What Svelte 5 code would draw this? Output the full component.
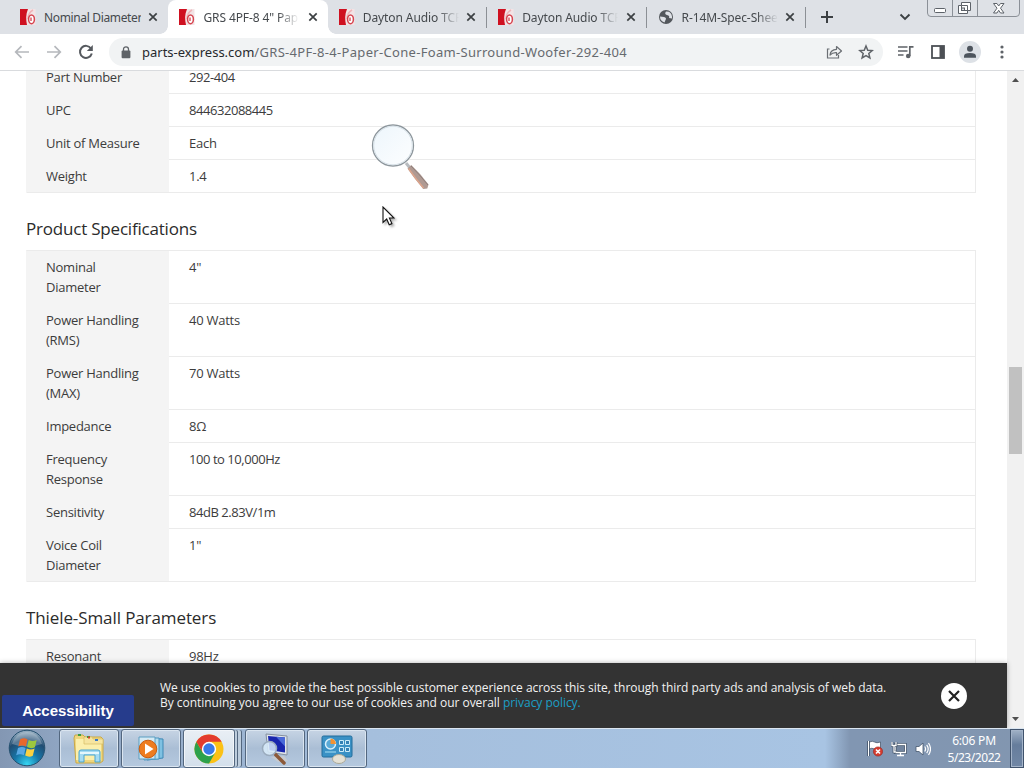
<script lang="ts">
  type Row = { label: string; value: string; numeric?: boolean };

  const tabs = [
    { title: "Nominal Diameter", icon: "parts", active: false },
    { title: "GRS 4PF-8 4\" Paper Cone", icon: "parts", active: true },
    { title: "Dayton Audio TCP115", icon: "parts", active: false },
    { title: "Dayton Audio TCP115", icon: "parts", active: false },
    { title: "R-14M-Spec-Sheet", icon: "globe", active: false },
  ];

  const details: Row[] = [
    { label: "Part Number", value: "292-404", numeric: true },
    { label: "UPC", value: "844632088445", numeric: true },
    { label: "Unit of Measure", value: "Each" },
    { label: "Weight", value: "1.4" },
  ];

  const specs: Row[] = [
    { label: "Nominal Diameter", value: "4\"" },
    { label: "Power Handling (RMS)", value: "40 Watts" },
    { label: "Power Handling (MAX)", value: "70 Watts" },
    { label: "Impedance", value: "8Ω" },
    { label: "Frequency Response", value: "100 to 10,000Hz", numeric: true },
    { label: "Sensitivity", value: "84dB 2.83V/1m", numeric: true },
    { label: "Voice Coil Diameter", value: "1\"" },
  ];

  const thiele: Row[] = [{ label: "Resonant Frequency (Fs)", value: "98Hz" }];

  let showCookies = $state(true);
</script>

{#snippet specTable(rows: Row[])}
  <dl class="spec-table">
    {#each rows as row}
      <div class="row">
        <dt>{row.label}</dt>
        <dd class:numeric={row.numeric}>{row.value}</dd>
      </div>
    {/each}
  </dl>
{/snippet}

<div class="screen">
  <header class="tabstrip">
    {#each tabs as tab}
      <div class="tab" class:active={tab.active}>
        {#if tab.icon === "parts"}
          <svg class="favicon" width="16" height="16" viewBox="0 0 16 16">
            <path d="M7 0h8.500v16H6z" fill="#f3e3e5" />
            <path d="M0 0H8Q5 7 7 16H0Z" fill="#cf1020" />
            <path d="M13 1Q8 4 8 10" fill="none" stroke="#efb4b8" stroke-width="1.500" />
            <ellipse cx="11.500" cy="10.300" rx="2.900" ry="4.400" fill="#fff" stroke="#d64550" stroke-width="1.500" />
            <path d="M11 8.500v3.500" stroke="#d2323e" stroke-width="1.200" />
          </svg>
        {:else}
          <svg class="favicon" width="16" height="16" viewBox="0 0 16 16">
            <circle cx="8" cy="8" r="7" fill="#53575c" />
            <path d="M8 2.5Q6 5 9 6Q12 6.500 11 9L14 9.500Q14.500 5 11 2.700ZM2 7.500L6 8Q9 9 7.500 11L6.500 13.500Q2 12 2 7.500Z" fill="#dee1e6" />
          </svg>
        {/if}
        <span class="tab-title">{tab.title}</span>
        <svg class="tab-close" width="10" height="10" viewBox="0 0 10 10">
          <path d="M1.300 1.300l7.400 7.400M8.700 1.300l-7.400 7.400" stroke="#3c4043" stroke-width="1.700" />
        </svg>
      </div>
    {/each}
    <svg class="new-tab" width="14" height="14" viewBox="0 0 14 14">
      <path d="M7 1v12M1 7h12" stroke="#3c4043" stroke-width="2" />
    </svg>
    <svg class="tab-search" width="12" height="8" viewBox="0 0 12 8">
      <path d="M1.500 1.500L6 6l4.500-4.500" fill="none" stroke="#3c4043" stroke-width="1.900" />
    </svg>
    <svg class="window-buttons" width="94" height="18" viewBox="0 0 94 18">
      <path d="M.5 0v13q0 3.500 3.500 3.500h85q3.500 0 3.500-3.500V0M25.500 0v16M50.500 0v16" fill="none" stroke="#8b9097" />
      <rect x="7.500" y="8.500" width="11" height="4" rx="1" fill="#fff" stroke="#5d6269" />
      <path d="M34.500 2.500h9v8h-3v3h-9v-8h3z" fill="#fff" stroke="#5d6269" />
      <path d="M34.500 5.500h6v5M34.500 5.500v5h6" fill="none" stroke="#5d6269" />
      <rect x="34.500" y="8" width="3" height="2.500" fill="#dee1e6" stroke="#5d6269" />
      <path d="M66.500 3.500h3.500l1.700 2.500 1.800-2.500h3.500l-3.500 4.700 3.500 4.800h-3.500l-1.800-2.700-1.700 2.700h-3.500l3.500-4.800z" fill="#fff" stroke="#5d6269" />
    </svg>
  </header>

  <nav class="toolbar">
    <svg class="nav-icon" width="16" height="14" viewBox="0 0 16 14">
      <path d="M15 7H2M7.500 1.200L1.700 7l5.800 5.800" fill="none" stroke="#b5b8bc" stroke-width="1.700" />
    </svg>
    <svg class="nav-icon forward" width="16" height="14" viewBox="0 0 16 14">
      <path d="M1 7h13M8.500 1.200L14.300 7l-5.800 5.800" fill="none" stroke="#b5b8bc" stroke-width="1.700" />
    </svg>
    <svg class="nav-icon reload" width="16" height="16" viewBox="0 0 16 16">
      <path d="M13 4.500A6 6 0 1 0 13.800 9.500" fill="none" stroke="#55595e" stroke-width="2" />
      <path d="M14.800 1v6h-6z" fill="#55595e" />
    </svg>
    <div class="address">
      <svg width="10" height="13" viewBox="0 0 10 13">
        <rect x=".6" y="4.500" width="8.800" height="7.800" rx="1" fill="#5f6368" />
        <path d="M2.500 5V3.300a2.500 2.500 0 0 1 5 0V5" fill="none" stroke="#5f6368" stroke-width="1.300" />
      </svg>
      <span class="url"><b>parts-express.com</b>/GRS-4PF-8-4-Paper-Cone-Foam-Surround-Woofer-292-404</span>
      <svg width="17" height="16" viewBox="0 0 17 16">
        <path d="M3.500 5H1.500V14h11v-3" fill="none" stroke="#6b6f74" stroke-width="1.200" />
        <path d="M4 11Q4.500 5.500 10.500 5.300V2.500L15.500 7l-5 4.300V8.600Q6.500 8.300 4 11Z" fill="none" stroke="#6b6f74" stroke-width="1.200" stroke-linejoin="round" />
      </svg>
      <svg class="star" width="16" height="16" viewBox="0 0 16 16">
        <path d="M8 2l1.750 4.200 4.500.35-3.450 2.950 1.080 4.400L8 11.550 4.120 13.900 5.200 9.500 1.750 6.550l4.500-.35z" fill="none" stroke="#5f6368" stroke-width="1.500" />
      </svg>
    </div>
    <svg class="media" width="17" height="14" viewBox="0 0 17 14">
      <path d="M1 2h9.500M1 6h9.500M1 10h5.500" stroke="#5f6368" stroke-width="1.700" />
      <path d="M12.800 11V1.900H16.500" fill="none" stroke="#5f6368" stroke-width="1.700" />
      <circle cx="11.200" cy="11" r="2.300" fill="#5f6368" />
    </svg>
    <svg class="panel" width="14" height="14" viewBox="0 0 14 14">
      <rect x="1" y="1" width="12" height="12" fill="#fff" stroke="#4c5055" stroke-width="1.800" />
      <path d="M8.500 1H13v12H8.500z" fill="#4c5055" />
    </svg>
    <svg class="profile" width="22" height="22" viewBox="0 0 22 22">
      <circle cx="11" cy="11" r="11" fill="#dde1e6" />
      <circle cx="11" cy="7.700" r="3" fill="#4d545d" />
      <path d="M5 16.800v-1.500q0-3.300 6-3.300t6 3.300v1.500z" fill="#4d545d" />
    </svg>
    <svg class="menu" width="4" height="14" viewBox="0 0 4 14">
      <circle cx="2" cy="2" r="1.600" fill="#5f6368" />
      <circle cx="2" cy="7" r="1.600" fill="#5f6368" />
      <circle cx="2" cy="12" r="1.600" fill="#5f6368" />
    </svg>
  </nav>

  <div class="viewport">
    <main class="page">
      {@render specTable(details)}
      <h2>Product Specifications</h2>
      {@render specTable(specs)}
      <h2 class="wide">Thiele-Small Parameters</h2>
      {@render specTable(thiele)}
    </main>

    <div class="scrollbar">
      <svg width="7" height="4" viewBox="0 0 7 4"><path d="M0 4L3.500 0 7 4z" fill="#505050" /></svg>
      <div class="thumb"></div>
      <svg width="7" height="4" viewBox="0 0 7 4"><path d="M0 0L3.500 4 7 0z" fill="#505050" /></svg>
    </div>

    {#if showCookies}
      <div class="cookies">
        <p>
          We use cookies to provide the best possible customer experience across this site, through third party ads and analysis of web data.<br />
          By continuing you agree to our use of cookies and our overall <a href="#privacy">privacy policy.</a>
        </p>
        <button class="dismiss" aria-label="Close" onclick={() => (showCookies = false)}>
          <svg width="12" height="12" viewBox="0 0 12 12">
            <path d="M1 1l10 10M11 1L1 11" stroke="#222" stroke-width="2.200" />
          </svg>
        </button>
      </div>
    {/if}
    <button class="accessibility">Accessibility</button>
  </div>

  <footer class="taskbar">
    <svg class="start" width="38" height="38" viewBox="0 0 38 38">
      <defs>
        <radialGradient id="orb" cx=".5" cy=".95" r=".9">
          <stop offset="0" stop-color="#35d5f2" />
          <stop offset=".4" stop-color="#1776a8" />
          <stop offset=".75" stop-color="#214c72" />
          <stop offset="1" stop-color="#8fa9bd" />
        </radialGradient>
      </defs>
      <circle cx="19" cy="19" r="17.800" fill="url(#orb)" stroke="#24506f" />
      <path d="M4 15Q8 3 19 3t15 12Q19 20 4 15z" fill="#fff" opacity=".25" />
      <path d="M12 10.500q4-2.500 7.500 0l-1.600 7q-3.500-2-7.600 0z" fill="#e8682c" />
      <path d="M20.700 11q4 2 8 0l-1.800 7.300q-3.800 2-7.800-.2z" fill="#9cc83e" />
      <path d="M10 18.900q4-2 7.600 0l-1.700 7.300q-4-2-7.700 0z" fill="#59a8e4" />
      <path d="M18.800 19.500q4 2 7.800 0l-1.800 7.200q-3.700 2-7.600-.2z" fill="#fbd141" />
    </svg>

    <div class="task">
      <svg width="34" height="32" viewBox="0 0 34 32">
        <path d="M2 5l1-3h8l2 2h16l2 2v22l-3 2H4z" fill="#efd67d" stroke="#c9a847" />
        <path d="M4 6h11l1 3h13v18H4z" fill="#fbefac" />
        <path d="M12 4h8l1 2h10v5H12z" fill="#f6e5a0" stroke="#d6bd66" stroke-width=".7" />
        <path d="M6 2h3M15 4h3" stroke="#3a9d43" stroke-width="2" />
        <path d="M16 4.500h2" stroke="#d8442e" stroke-width="2" />
        <path d="M23 7h3" stroke="#3777c7" stroke-width="2" />
        <path d="M7 29V19q0-2 2-2h17q2 0 2 2v10h-5v-7H12v7z" fill="#a5dbf2" stroke="#4ba5cf" />
        <path d="M8 20h19" stroke="#e4f7fd" stroke-width="2" />
      </svg>
    </div>
    <div class="task">
      <svg width="28" height="26" viewBox="0 0 28 26">
        <path d="M10 2l16 1v19l-16 2z" fill="#7fc1e2" stroke="#3d88b5" />
        <path d="M7 2l15 0v21l-15 1z" fill="#b5def0" stroke="#4b96c0" />
        <path d="M2 1h16v22H2z" fill="#d5eaf4" stroke="#5b9ec2" />
        <circle cx="11" cy="13" r="8.800" fill="#ee7d20" stroke="#c95e12" />
        <path d="M8 7.500v11l8.500-5.500z" fill="#fff" />
      </svg>
    </div>
    <div class="task current">
      <svg width="30" height="30" viewBox="0 0 30 30">
        <circle cx="15" cy="15" r="14.500" fill="#fbc116" />
        <path d="M2.440 7.750A14.500 14.500 0 0 0 15 29.500L21.280 18.600 15 15 8.720 18.600z" fill="#2da14c" />
        <path d="M2.440 7.750A14.500 14.500 0 0 1 27.560 7.750H15L8.720 18.600z" fill="#e33b2e" />
        <circle cx="15" cy="15" r="7.200" fill="#fff" />
        <circle cx="15" cy="15" r="5.700" fill="#3979e8" />
      </svg>
    </div>
    <div class="task">
      <svg width="30" height="32" viewBox="0 0 30 32">
        <path d="M6 1l21 2v19L8 19z" fill="#dfe4ea" stroke="#84909f" />
        <path d="M8 3l17 1.600v15L9.500 17.300z" fill="#1926ad" />
        <path d="M16 3.800l9 .8v9z" fill="#4969d8" />
        <path d="M11 24l13-1 4 5-10 1z" fill="#c7cbd0" />
        <path d="M15 21l9 9" stroke="#8c5a39" stroke-width="3.500" stroke-linecap="round" />
        <circle cx="9.500" cy="15.500" r="7" fill="#d9ecfa" fill-opacity=".85" stroke="#9aabbd" stroke-width="1.500" />
      </svg>
    </div>
    <div class="task">
      <svg width="32" height="30" viewBox="0 0 32 30">
        <rect x="1" y="2" width="30" height="21" rx="1.500" fill="#3a91c5" stroke="#226c9b" />
        <circle cx="9.500" cy="10" r="5" fill="#59a9d6" stroke="#d9f0fb" stroke-width="1.500" />
        <path d="M9.500 10V4.500a5.500 5.500 0 0 1 5.500 5.500z" fill="#f29232" />
        <path d="M18.500 6.500h4v4h-4zM24.500 6.500h4v4h-4zM18.500 13.500h4v4h-4zM24.500 13.500h4v4h-4z" fill="#3481b4" stroke="#ccecf9" />
        <path d="M4 18h11" stroke="#84c7e5" stroke-width="1.500" />
        <ellipse cx="18" cy="25" rx="6.500" ry="4.500" fill="#e4e1d5" stroke="#aaa897" />
      </svg>
    </div>

    <div class="tray">
      <svg width="16" height="17" viewBox="0 0 16 17">
        <path d="M1.500 1v15" stroke="#3e4d62" stroke-width="2.500" />
        <path d="M1.500 1v15" stroke="#fff" />
        <path d="M2.500 2q3-1.500 5 0t6 0v7q-3 1.500-6 0t-5 0z" fill="#fff" stroke="#3e4d62" stroke-width=".7" />
        <circle cx="11" cy="11.500" r="4.600" fill="#d63c2f" stroke="#9d221b" stroke-width=".6" />
        <path d="M9 9.500l4 4M13 9.500l-4 4" stroke="#fff" stroke-width="1.600" />
      </svg>
      <svg width="16" height="16" viewBox="0 0 16 16">
        <path d="M4.500 3.500h10v8h-10z" fill="#71849e" stroke="#33445a" stroke-width="2.600" />
        <path d="M4.500 3.500h10v8h-10zM9.500 11.500v3M6 14.500h7" fill="none" stroke="#fff" stroke-width="1.300" />
        <path d="M1 1v3.500h4V1M3 4.500V11h2" fill="none" stroke="#33445a" stroke-width="2.600" />
        <path d="M1 1v3.500h4V1M3 4.500V11h2" fill="none" stroke="#fff" stroke-width="1.300" />
      </svg>
      <svg width="16" height="16" viewBox="0 0 16 16">
        <path d="M1 5.500h3L8 2v12l-4-3.500H1z" fill="#fff" stroke="#44556d" stroke-width=".8" />
        <path d="M9.700 5.500q1.800 2.500 0 5M11.700 3.800q3 4.200 0 8.400M13.500 2q4 6 0 12" fill="none" stroke="#fff" stroke-width="1.200" />
      </svg>
    </div>
    <div class="clock">
      <span>6:06 PM</span>
      <span>5/23/2022</span>
    </div>
    <div class="show-desktop"></div>
  </footer>

  <svg class="magnifier" width="60" height="68" viewBox="0 0 60 68">
    <defs>
      <linearGradient id="lens" x1="0" y1="0" x2="1" y2="1">
        <stop offset="0" stop-color="#edf6fc" />
        <stop offset="1" stop-color="#fdfeff" />
      </linearGradient>
    </defs>
    <path d="M35 39l4 5" stroke="#b8bcc0" stroke-width="3" />
    <path d="M36.500 44.500l3.800-3.500Q49 49 57.500 60.500l-1.200 4-4 .5Q43 54 36.500 44.500z" fill="#b09a93" />
    <path d="M37.500 44.500Q44 54 52.500 64" fill="none" stroke="#dba48c" stroke-width="1.500" />
    <path d="M40 42q8 8 17 19" fill="none" stroke="#8e7f7b" />
    <circle cx="22" cy="21.500" r="20.500" fill="url(#lens)" stroke="#8d969c" stroke-width="1.300" />
    <circle cx="22" cy="21.500" r="19.300" fill="none" stroke="#d6e0e7" />
  </svg>
  <svg class="cursor" width="13" height="20" viewBox="0 0 13 20">
    <path d="M1 1v15.500l3.700-3.500 2.500 5.800 2.700-1.200-2.500-5.600H12z" fill="#fff" stroke="#111" stroke-width="1.100" />
  </svg>
</div>

<style>
  :global(body) {
    overflow: hidden;
  }
  .screen {
    position: relative;
    display: flex;
    flex-direction: column;
    width: 1024px;
    height: 768px;
    overflow: hidden;
    background: #fff;
    font-family: "Open Sans", sans-serif;
  }
  svg {
    display: block;
    flex: none;
  }
  button {
    border: none;
    padding: 0;
  }

  .tabstrip {
    display: flex;
    flex: none;
    box-sizing: border-box;
    height: 34px;
    padding-left: 9px;
    background: #dee1e6;
  }
  .tab {
    position: relative;
    display: flex;
    align-items: center;
    box-sizing: border-box;
    width: 159.4px;
    padding: 0 10px 0 11px;
  }
  .tab.active {
    border-radius: 8px 8px 0 0;
    background: #fff;
  }
  .tab.active::before,
  .tab.active::after {
    content: "";
    position: absolute;
    bottom: 0;
    left: -8px;
    width: 8px;
    height: 8px;
    background: radial-gradient(circle at 0 0, transparent 7.5px, #fff 8px);
  }
  .tab.active::after {
    left: auto;
    right: -8px;
    background: radial-gradient(circle at 100% 0, transparent 7.5px, #fff 8px);
  }
  .tab:nth-child(n + 3) {
    border-right: 1px solid transparent;
    border-image: linear-gradient(transparent 8px, #8c9095 8px, #8c9095 27px, transparent 27px) 1;
  }
  .tab-title {
    flex: 1;
    margin-left: 8px;
    overflow: hidden;
    white-space: nowrap;
    font-family: "Noto Sans", sans-serif;
    font-size: 12px;
    letter-spacing: -0.1px;
    color: #45494d;
    -webkit-mask-image: linear-gradient(to right, #000 75px, transparent 96px);
    mask-image: linear-gradient(to right, #000 75px, transparent 96px);
  }
  .tab:first-child .tab-title {
    letter-spacing: -0.35px;
    -webkit-mask-image: none;
    mask-image: none;
  }
  .tab-close {
    margin-left: 7px;
  }
  .new-tab {
    margin: 10px 0 0 14px;
  }
  .tab-search {
    margin: 13px 0 0 auto;
  }
  .window-buttons {
    margin: 0 3px 0 16px;
  }

  .toolbar {
    display: flex;
    align-items: center;
    flex: none;
    box-sizing: border-box;
    height: 37px;
    padding: 0 20px 0 14px;
    border-bottom: 1px solid #d9dbde;
  }
  .forward {
    margin-left: 16px;
  }
  .reload {
    margin-left: 16px;
  }
  .address {
    display: flex;
    align-items: center;
    box-sizing: border-box;
    width: 774px;
    height: 28px;
    margin-left: 15px;
    padding: 0 9px 0 12px;
    border-radius: 14px;
    background: #f1f3f4;
  }
  .url {
    flex: 1;
    margin-left: 11px;
    font-family: "Noto Sans", sans-serif;
    font-size: 13px;
    letter-spacing: 0.31px;
    color: #666a6f;
    white-space: nowrap;
  }
  .url b {
    font-weight: 400;
    letter-spacing: 0;
    color: #26292d;
  }
  .star {
    margin-left: 15px;
  }
  .media {
    margin-left: 14px;
  }
  .panel {
    margin-left: 17px;
  }
  .profile {
    margin-left: 14px;
  }
  .menu {
    margin-left: auto;
  }

  .viewport {
    position: relative;
    display: flex;
    flex: none;
    height: 657px;
    overflow: hidden;
  }
  .page {
    box-sizing: border-box;
    width: 1007px;
    margin-top: -11px;
    padding: 0 31px 0 26px;
  }
  .spec-table {
    margin: 0;
    border: 1px solid #ebebeb;
    border-left-color: #f4f4f4;
    border-bottom: none;
  }
  .row {
    display: flex;
    font-size: 13px;
    line-height: 20px;
    letter-spacing: -0.25px;
    color: #3c3c3c;
  }
  dt {
    box-sizing: border-box;
    width: 142px;
    padding: 6px 20px 7px 19px;
    background: #f4f4f4;
  }
  dd {
    flex: 1;
    margin: 0;
    padding: 6px 20px;
    border-bottom: 1px solid #ebebeb;
  }
  dd.numeric {
    letter-spacing: -0.45px;
  }
  .row:last-child dt {
    padding-bottom: 6px;
    border-bottom: 1px solid #ebebeb;
  }
  h2 {
    margin: 0;
    height: 57px;
    line-height: 72px;
    font-size: 17px;
    font-weight: 400;
    letter-spacing: -0.2px;
    color: #2b2b2b;
  }
  h2.wide {
    letter-spacing: -0.1px;
  }

  .scrollbar {
    display: flex;
    flex-direction: column;
    align-items: center;
    justify-content: space-between;
    box-sizing: border-box;
    width: 17px;
    padding: 7px 0;
    background: #f1f1f1;
  }
  .thumb {
    width: 13px;
    height: 87px;
    margin-top: 21px;
    background: #c1c1c1;
  }

  .cookies {
    position: absolute;
    left: 0;
    bottom: 0;
    display: flex;
    justify-content: space-between;
    box-sizing: border-box;
    width: 1007px;
    height: 65px;
    padding: 17px 40px 0 160px;
    background: #333;
    box-shadow: 0 0 5px rgba(0, 0, 0, 0.3);
  }
  .cookies p {
    margin: 0;
    font-size: 12px;
    line-height: 15px;
    letter-spacing: -0.035px;
    color: #f2f2f2;
    white-space: nowrap;
  }
  .cookies a {
    color: #1b9fc6;
    text-decoration: none;
  }
  .dismiss {
    display: flex;
    align-items: center;
    justify-content: center;
    width: 26px;
    height: 26px;
    margin-top: 3px;
    border-radius: 50%;
    background: #fff;
  }
  .accessibility {
    position: absolute;
    left: 2px;
    bottom: 2px;
    width: 132px;
    height: 31px;
    border-radius: 2px;
    background: #263c8c;
    font-family: "Liberation Sans", sans-serif;
    font-size: 15px;
    font-weight: 700;
    color: #fff;
  }

  .taskbar {
    display: flex;
    flex: none;
    box-sizing: border-box;
    height: 40px;
    border-top: 1px solid #dbe6f1;
    background: linear-gradient(to right, #8397b3 0, #8fa5c2 60px, #a5bfdd 370px, #a8c4e3 825px, #8196b2 850px, #8296b0 1024px);
  }
  .start {
    margin: 0 12px 0 8px;
  }
  .task {
    display: flex;
    align-items: center;
    justify-content: center;
    box-sizing: border-box;
    width: 60px;
    height: 39px;
    margin-left: 2px;
    border: 1px solid #53677f;
    border-radius: 3px;
    background: linear-gradient(#c6d4e4, #aabed5 50%, #b5c9df);
    box-shadow: inset 0 0 0 1px #dae5f0;
  }
  .start + .task {
    margin-left: 1px;
  }
  .current {
    width: 52px;
    margin-right: 8px;
    background: linear-gradient(#e9eff5, #d3dfeb);
    box-shadow: inset 0 0 0 1px #f2f6fa, 3px 0 0 -1px #bdcddd, 4px 0 0 -1px #53677f, 7px 0 0 -1px #bdcddd, 8px 0 0 -1px #53677f;
  }
  .tray {
    display: flex;
    align-items: center;
    gap: 8px;
    margin-left: auto;
  }
  .clock {
    display: flex;
    flex-direction: column;
    align-items: center;
    width: 56px;
    margin: 3px 8px 0 15px;
    font-family: "Noto Sans", sans-serif;
    font-size: 12px;
    line-height: 17px;
    letter-spacing: -0.45px;
    color: #fff;
    white-space: nowrap;
  }
  .clock span:first-child {
    letter-spacing: -0.2px;
  }
  .show-desktop {
    box-sizing: border-box;
    width: 14px;
    border: 1px solid #40536c;
    background: linear-gradient(#a1b2c7, #667d9c 40%, #7187a5);
    box-shadow: inset 0 0 0 1px #a4b4c9;
  }

  .magnifier {
    position: absolute;
    left: 371px;
    top: 124px;
  }
  .cursor {
    position: absolute;
    left: 382px;
    top: 206px;
    filter: drop-shadow(2px 2px 1px rgba(0, 0, 0, 0.3));
  }
</style>
